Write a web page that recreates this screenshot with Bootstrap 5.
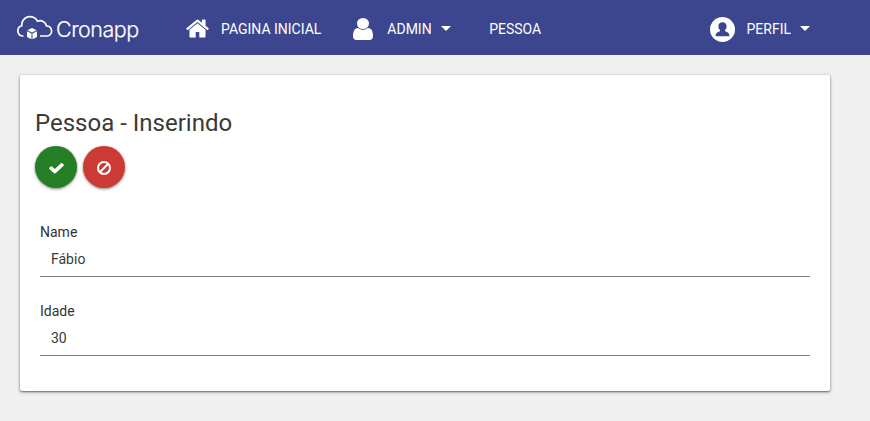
<!DOCTYPE html>
<html lang="pt-BR">
<head>
<meta charset="utf-8">
<meta name="viewport" content="width=device-width, initial-scale=1">
<title>Pessoa</title>
<link href="https://cdn.jsdelivr.net/npm/bootstrap@5.3.0/dist/css/bootstrap.min.css" rel="stylesheet">
<style>
body{background:#f0f0f0;font-family:Roboto,sans-serif;font-size:14px;color:#3a3a3a}
.topbar{height:55px;background:#3c468e;padding:0 60px 0 17px}
.topbar .nav-link{color:#fff;padding:2px 0 0;line-height:20px}
.topbar .nav-link:hover{color:#fff}
.topbar svg{display:block;flex:none}
.brand-name{font-family:Inter,sans-serif;font-weight:300;font-size:21.500px;line-height:28px;letter-spacing:-.5px;margin-left:2px;-webkit-text-stroke:.2px #fff;width:86px;padding-top:2px}
.first-item{margin-left:43px}
.admin-item{margin-left:32px}
.plain-item{margin-left:38.500px}
.item-text{margin-left:11px}
.admin-item .item-text{margin-left:14px}
.arrow{width:0;height:0;border:5px solid transparent;border-top-color:#fff;border-bottom:0;margin-left:9px}
.panel{margin:20px 40px 0 20px;height:316px;border:0;border-radius:2px;padding:33px 15px 0;box-shadow:0 1px 2px rgba(0,0,0,.5),0 1px 4px rgba(0,0,0,.2)}
.panel h1{font-size:24px;line-height:30px;font-weight:400;margin:0 0 8px;color:#3a3a3a}
.actions{gap:6px}
.round{width:42px;height:42px;padding:2px 0 0;border:0;color:#fff;box-shadow:0 1px 3px rgba(0,0,0,.5)}
.ok{background:#267f26}.no{background:#cd3a36}
.fields{padding:34px 5px 0}
.form-label{display:block;line-height:20px;margin:0;color:#333}
.form-control{height:35px;font-size:14px;line-height:20px;border:0;border-bottom:1px solid #808080;border-radius:0;padding:7px 11px;color:#3a3a3a}
.field+.field{margin-top:24px}
</style>
</head>
<body class="min-vh-100">
<nav class="topbar d-flex align-items-center text-white">
  <a class="d-flex align-items-center text-white text-decoration-none" href="#">
    <svg width="37" height="28" viewBox="0 0 37 28" fill="none"><path d="M6.500 22H5.500A5.200 5.200 0 0 1 4.800 11.800A8.300 8.300 0 0 1 20.500 7.200A6.500 6.500 0 0 1 29.500 11.900A5.100 5.100 0 0 1 30.500 22H23" stroke="#fff" stroke-width="1.700"/><path d="M15 14l4.600 2.200-4.600 2.200-4.600-2.200zM10 17.200l4.500 2.200V25.200L10 23zM20 17.200l-4.500 2.200V25.200L20 23z" fill="#fff"/></svg>
    <span class="brand-name">Cronapp</span>
  </a>
  <a class="nav-link d-flex align-items-center first-item" href="#">
    <svg width="25" height="25" viewBox="0 0 1792 1792" fill="#fff"><path d="M1472 992v480q0 26-19 45t-45 19h-384v-384h-256v384h-384q-26 0-45-19t-19-45v-480q0-1 .5-3t.5-3l575-474 575 474q1 2 1 6zm223-69l-62 74q-8 9-21 11h-3q-13 0-21-7l-692-577-692 577q-12 8-24 7-13-2-21-11l-62-74q-8-10-7-23.500t11-21.500l719-599q32-26 76-26t76 26l244 204v-195q0-14 9-23t23-9h192q14 0 23 9t9 23v408l219 182q10 8 11 21.500t-7 23.500z"/></svg>
    <span class="item-text">PAGINA INICIAL</span>
  </a>
  <a class="nav-link d-flex align-items-center admin-item" href="#">
    <svg width="20" height="22" viewBox="256 128 1280 1536" preserveAspectRatio="none" fill="#fff"><path d="M1536 1399q0 109-62.500 187t-150.500 78h-854q-88 0-150.500-78t-62.500-187q0-85 8.500-160.500t31.500-152 58.500-131 94-89 134.500-34.500q131 128 313 128t313-128q76 0 134.500 34.500t94 89 58.500 131 31.500 152 8.500 160.500zm-256-887q0 159-112.500 271.500t-271.500 112.500-271.500-112.500-112.500-271.500 112.500-271.500 271.500-112.500 271.500 112.500 112.500 271.500z"/></svg>
    <span class="item-text">ADMIN</span><span class="arrow"></span>
  </a>
  <a class="nav-link plain-item" href="#">PESSOA</a>
  <a class="nav-link d-flex align-items-center ms-auto" href="#">
    <svg width="25" height="27" viewBox="0 -2 25 27"><circle cx="12.500" cy="12.500" r="12.500" fill="#fff"/><path d="M12.500 5.200c2.800 0 4.200 1.900 4.100 4.200 0 1.600-.7 2.900-1.700 3.700 0 1 .5 1.400 1.700 1.800 2 .7 2.800 1.600 2.800 4.300H5.600c0-2.700.8-3.600 2.800-4.300 1.200-.4 1.700-.8 1.700-1.800-1-.8-1.700-2.100-1.700-3.700-.1-2.300 1.300-4.200 4.100-4.200z" fill="#3c468e"/></svg>
    <span class="item-text">PERFIL</span><span class="arrow"></span>
  </a>
</nav>
<main class="card panel">
  <h1>Pessoa - Inserindo</h1>
  <div class="d-flex actions">
    <button class="btn rounded-circle d-flex align-items-center justify-content-center round ok" type="button" aria-label="Salvar"><svg width="17" height="16" viewBox="0 0 1792 1792" preserveAspectRatio="none" fill="#fff"><path d="M1671 566q0 40-28 68l-724 724-136 136q-28 28-68 28t-68-28l-136-136-362-362q-28-28-28-68t28-68l136-136q28-28 68-28t68 28l294 295 656-657q28-28 68-28t68 28l136 136q28 28 28 68z"/></svg></button>
    <button class="btn rounded-circle d-flex align-items-center justify-content-center round no" type="button" aria-label="Cancelar"><svg width="14" height="14" viewBox="0 0 14 14" fill="none" stroke="#fff" stroke-width="2"><circle cx="7" cy="7" r="6"/><path d="M2.800 11.200l8.400-8.400"/></svg></button>
  </div>
  <form class="fields">
    <div class="field"><label class="form-label" for="nome">Name</label><input class="form-control" id="nome" value="Fábio"></div>
    <div class="field"><label class="form-label" for="idade">Idade</label><input class="form-control" id="idade" value="30"></div>
  </form>
</main>
<script src="https://cdn.jsdelivr.net/npm/bootstrap@5.3.0/dist/js/bootstrap.bundle.min.js"></script>
</body>
</html>
